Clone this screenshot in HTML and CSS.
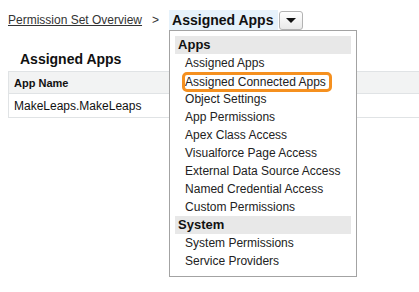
FILE: index.html
```html
<!DOCTYPE html>
<html lang="en">
<head>
    <meta charset="UTF-8">
    <title>Assigned Apps</title>
    <link rel="stylesheet" href="styles.css">
</head>
<body>
    <div class="breadcrumb">
        <a href="#" class="crumb-link">Permission Set Overview</a>
        <span class="crumb-sep">&gt;</span>
        <div class="crumb-current">
            <span class="current-title">Assigned Apps</span>
            <button class="menu-toggle" aria-label="Open menu"><span class="caret"></span></button>

            <div class="jump-menu">
                <div class="menu-group">Apps</div>
                <div class="menu-item">Assigned Apps</div>
                <div class="menu-item"><span class="callout">Assigned Connected Apps</span></div>
                <div class="menu-item">Object Settings</div>
                <div class="menu-item">App Permissions</div>
                <div class="menu-item">Apex Class Access</div>
                <div class="menu-item">Visualforce Page Access</div>
                <div class="menu-item">External Data Source Access</div>
                <div class="menu-item">Named Credential Access</div>
                <div class="menu-item">Custom Permissions</div>
                <div class="menu-group">System</div>
                <div class="menu-item">System Permissions</div>
                <div class="menu-item">Service Providers</div>
            </div>
        </div>
    </div>

    <div class="section">
        <h2 class="section-title">Assigned Apps</h2>
        <table class="app-table">
            <thead>
                <tr><th>App Name</th></tr>
            </thead>
            <tbody>
                <tr><td>MakeLeaps.MakeLeaps</td></tr>
            </tbody>
        </table>
    </div>
</body>
</html>
```

FILE: styles.css
```css
:root {
    --text-dark: #1e1e1e;
    --border-light: #e0e3e5;
    --header-bg: #f2f3f3;
    --menu-border: #a3a3a3;
    --callout: #f5901f;
}

html, body {
    height: 100%;
}

body {
    margin: 0;
    background: #ffffff;
    font-family: "Liberation Sans", Arial, sans-serif;
    color: var(--text-dark);
}

.breadcrumb {
    position: relative;
    z-index: 10;
    display: flex;
    align-items: center;
    padding: 10px 0 0 8px;
    height: 20px;
}

.crumb-link {
    font-size: 12px;
    color: #333;
    text-decoration: underline;
}

.crumb-sep {
    font-size: 12px;
    margin: 0 10px 0 10px;
    color: #333;
}

.crumb-current {
    position: relative;
    display: flex;
    align-items: center;
}

.current-title {
    display: block;
    font-size: 14px;
    font-weight: bold;
    line-height: 20px;
    padding: 0 5px 0 3px;
    background: #e6f2fb;
    color: #111;
}

.menu-toggle {
    width: 24px;
    height: 19px;
    margin-left: 1px;
    padding: 0;
    border: 1px solid #b3b3b3;
    border-radius: 3px;
    background: linear-gradient(#ffffff, #e9e9e9);
    display: flex;
    align-items: center;
    justify-content: center;
}

.caret {
    width: 0;
    height: 0;
    border-left: 5px solid transparent;
    border-right: 5px solid transparent;
    border-top: 5px solid #111;
}

.jump-menu {
    position: absolute;
    top: 20px;
    left: 0;
    width: 176px;
    padding: 5px 5px 6px;
    background: #ffffff;
    border: 1px solid var(--menu-border);
}

.menu-group {
    font-size: 13px;
    font-weight: bold;
    line-height: 18px;
    padding-left: 3px;
    background: #e8e8e8;
    color: #111;
}

.menu-item {
    font-size: 12px;
    line-height: 18px;
    padding-left: 10px;
    color: #222;
}

.callout {
    display: inline-block;
    line-height: 14px;
    padding-right: 3px;
    vertical-align: middle;
    border-radius: 2px;
    outline: 3px solid var(--callout);
    outline-offset: 0;
}

.section {
    margin-top: 21px;
    padding-left: 8px;
    overflow: hidden;
}

.section-title {
    margin: 0 0 4px 12px;
    font-size: 14px;
    font-weight: bold;
    line-height: 16px;
    color: #111;
}

.app-table {
    width: calc(100% + 20px);
    border-collapse: collapse;
    border-left: 1px solid var(--border-light);
}

.app-table th {
    text-align: left;
    font-size: 11px;
    font-weight: bold;
    height: 21px;
    padding: 0 5px;
    background: var(--header-bg);
    border-top: 1px solid var(--border-light);
    border-bottom: 1px solid var(--border-light);
    color: #111;
}

.app-table td {
    font-size: 12px;
    height: 23px;
    padding: 0 5px;
    border-bottom: 1px solid var(--border-light);
    color: #111;
}
```
